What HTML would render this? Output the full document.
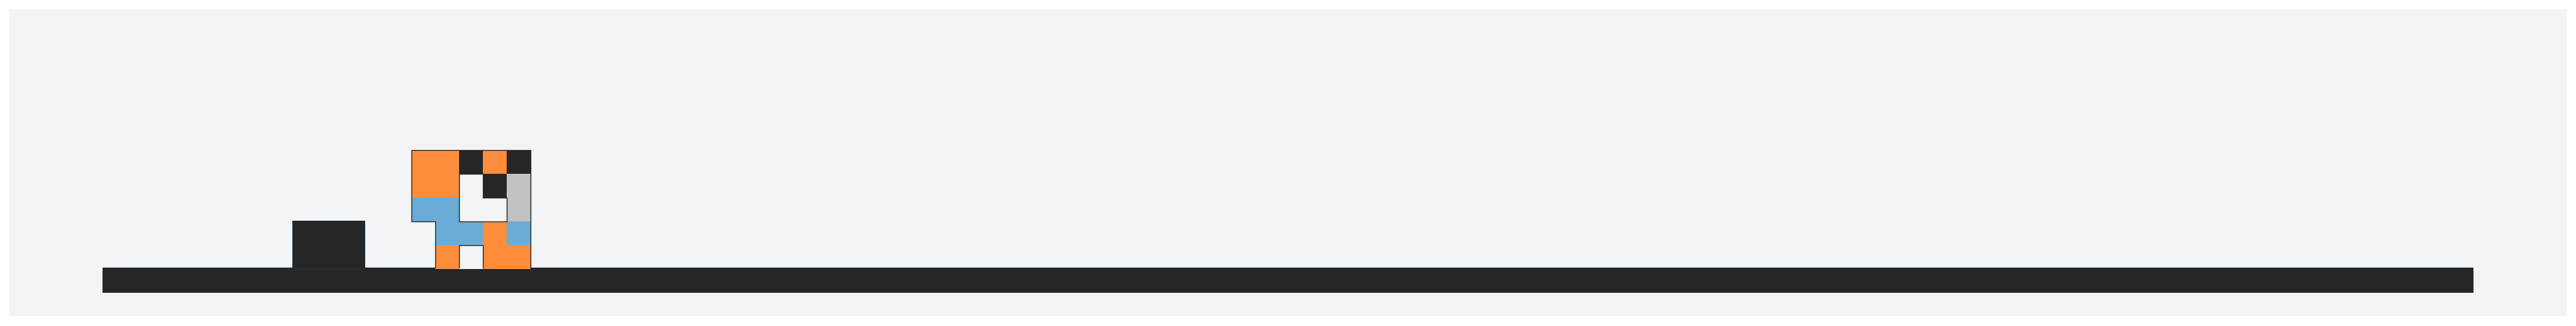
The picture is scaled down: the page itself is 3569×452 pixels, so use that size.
<!DOCTYPE html>
<html><head><style>
html,body{margin:0;padding:0;background:#fff;width:3569px;height:452px;overflow:hidden}
.p{position:absolute;left:13px;top:13px;width:3543px;height:425px;background:#f3f4f6}
.c{position:absolute;width:33px;height:33px}
.O{background:#fe8d3b}.K{background:#262626}.B{background:#6aacd6}.G{background:#c2c2c2}.W{background:#f3f4f6}
</style></head><body>
<div class="p"></div>
<div style="position:absolute;left:143px;top:372px;width:3283px;height:33px;background:#262626;box-shadow:0 0 0 1px #1f3340"></div>
<div style="position:absolute;left:406px;top:307px;width:99px;height:66px;background:#262626;box-shadow:0 0 0 1px #1f3340"></div>
<div id="g"></div>
<script>
var m=["OOKOK","OOWKG","BBWWG",".BBOB",".OWOO"];
var h="";
for(var r=0;r<5;r++)for(var c=0;c<5;c++){var t=m[r][c];if(t==".")continue;
h+='<div class="c '+t+'" style="left:'+(570+c*33)+'px;top:'+(208+r*33)+'px"></div>';}
document.getElementById("g").innerHTML=h;
</script>
<svg style="position:absolute;left:0;top:0" width="3569" height="452">
<path d="M570.5 208.5H735.5V372M570.5 208.5V307.5H603.5V372M636.5 241.5V307.5H702.5V274.5H669.5V241.5H636.5M636.5 372V340.5H669.5V372" fill="none" stroke="#2b2b2b" stroke-width="1.3"/>
</svg>
</body></html>
